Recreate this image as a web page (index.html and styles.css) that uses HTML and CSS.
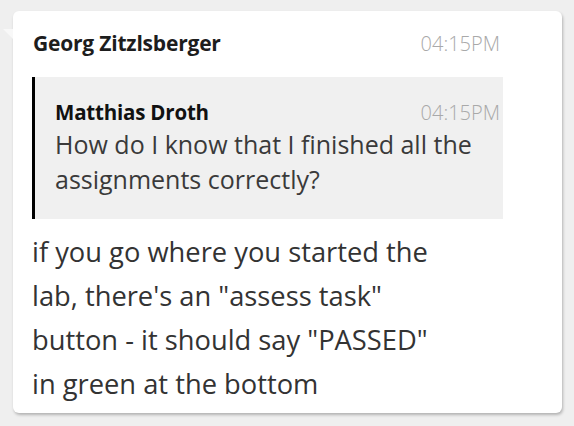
FILE: index.html
```html
<!DOCTYPE html>
<html>
<head>
<meta charset="utf-8">
<link rel="stylesheet" href="styles.css">
</head>
<body>
<div class="wrap">
  <div class="tail"></div>
  <div class="card">
    <div class="head">
      <span class="name">Georg Zitzlsberger</span>
      <span class="time">04:15PM</span>
    </div>
    <div class="quote">
      <div class="qhead">
        <span class="qname">Matthias Droth</span>
        <span class="time qtime">04:15PM</span>
      </div>
      <div class="qtext">How do I know that I finished all the assignments correctly?</div>
    </div>
    <div class="msg">if you go where you started the lab, there's an "assess task" button - it should say "PASSED" in green at the bottom</div>
  </div>
</div>
</body>
</html>
```
FILE: styles.css
```css
html, body { margin: 0; padding: 0; }
body {
  background: #efefef;
  font-family: "Open Sans", "Liberation Sans", sans-serif;
  width: 574px;
  height: 426px;
  overflow: hidden;
}
.wrap {
  position: relative;
  padding: 11px 12px 0 13px;
}
.tail {
  position: absolute;
  left: 3px;
  top: 29px;
  width: 0;
  height: 0;
  border-top: 10px solid #f8f8f8;
  border-left: 10px solid transparent;
}
.card {
  background: #fff;
  border-radius: 6px;
  box-shadow: 1px 2px 3px rgba(0,0,0,0.25);
  height: 402px;
  box-sizing: border-box;
  padding: 18px 59px 0 19px;
}
.head {
  display: flex;
  justify-content: space-between;
  align-items: baseline;
  padding-left: 1px;
  padding-right: 3px;
  height: 29px;
}
.name {
  font-weight: 700;
  font-size: 21px;
  letter-spacing: -0.2px;
  color: #1d1d1d;
}
.time {
  font-weight: 300;
  font-size: 20px;
  color: #a9a9a9;
}
.quote {
  margin-top: 19px;
  background: #f0f0f0;
  border-left: 3px solid #000;
  height: 142px;
  box-sizing: border-box;
  padding: 20px 3px 0 20px;
}
.qhead {
  display: flex;
  justify-content: space-between;
  align-items: baseline;
  height: 30px;
  line-height: 30px;
}
.qname {
  font-weight: 700;
  font-size: 20.5px;
  letter-spacing: -0.2px;
  color: #111;
}
.qtext {
  font-size: 25px;
  line-height: 35px;
  color: #3a3a3a;
}
.msg {
  margin-top: 11px;
  margin-right: 55px;
  font-size: 27.3px;
  line-height: 44px;
  color: #333;
}
```
